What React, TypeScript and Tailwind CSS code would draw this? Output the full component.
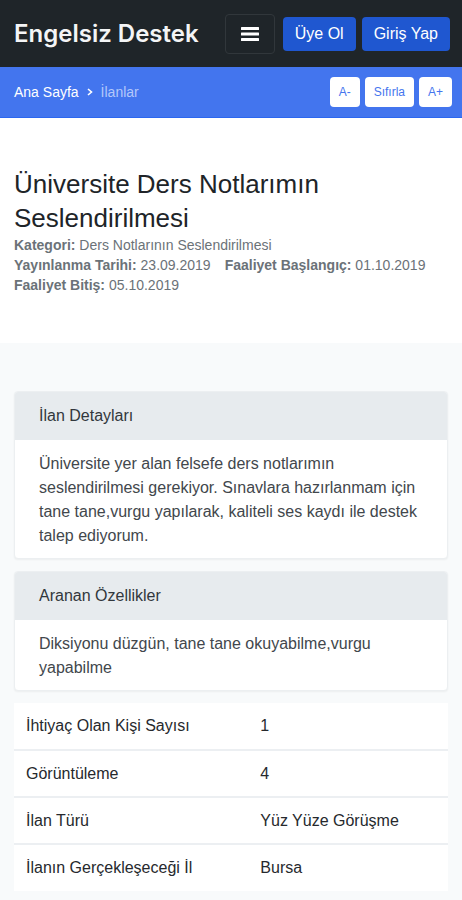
import { ReactNode } from "react";

type Row = { label: string; value: string };

const rows: Row[] = [
  { label: "İhtiyaç Olan Kişi Sayısı", value: "1" },
  { label: "Görüntüleme", value: "4" },
  { label: "İlan Türü", value: "Yüz Yüze Görüşme" },
  { label: "İlanın Gerçekleşeceği İl", value: "Bursa" },
];

function Header() {
  return (
    <header className="flex h-[67px] items-center bg-[#1f2529] pr-3 pl-3.5">
      <a href="#" className="mr-auto font-['Inter',sans-serif] text-2xl font-semibold whitespace-nowrap text-[#f4f5f6]">
        Engelsiz Destek
      </a>
      <button type="button" aria-label="Menü" className="flex h-10 w-[50px] items-center justify-center rounded-sm border border-[#31373b] text-white">
        <svg width="18" height="14" viewBox="0 0 18 14" fill="currentColor" aria-hidden="true">
          <rect y="0" width="18" height="3" rx="0.5" />
          <rect y="5.5" width="18" height="3" rx="0.5" />
          <rect y="11" width="18" height="3" rx="0.5" />
        </svg>
      </button>
      <a href="#" className="ml-2 flex h-[34px] items-center rounded-sm bg-[#1f57d0] px-3 text-base whitespace-nowrap text-white">Üye Ol</a>
      <a href="#" className="ml-1.5 flex h-[34px] items-center rounded-sm bg-[#1f57d0] px-3 text-base whitespace-nowrap text-white">Giriş Yap</a>
    </header>
  );
}

function SizeButton({ children }: { children: ReactNode }) {
  return (
    <button type="button" className="h-[30px] rounded-sm bg-white px-[9px] text-xs text-[#4575ee]">
      {children}
    </button>
  );
}

function Breadcrumb() {
  return (
    <div className="flex h-[51px] items-center border-b border-[#2b67f0] bg-[#4375ee] pr-2.5 pl-3.5">
      <nav aria-label="Konum" className="mr-auto flex items-center text-sm text-white">
        <a href="#">Ana Sayfa</a>
        <svg width="6" height="8" viewBox="0 0 6 8" className="mx-2" fill="none" stroke="currentColor" strokeWidth="1.6" aria-hidden="true">
          <path d="M1 1l3.5 3L1 7" />
        </svg>
        <a href="#" className="text-[#b4c8fa]">İlanlar</a>
      </nav>
      <div className="flex gap-[5px]">
        <SizeButton>A-</SizeButton>
        <SizeButton>Sıfırla</SizeButton>
        <SizeButton>A+</SizeButton>
      </div>
    </div>
  );
}

function Card({ title, children }: { title: string; children: ReactNode }) {
  return (
    <section className="mb-3 overflow-hidden rounded-sm border border-[#eceff1] bg-white shadow-xs">
      <h2 className="bg-[#e7ebee] px-6 py-3 text-base text-[#32373c]">{title}</h2>
      <p className="px-6 pt-3 pb-2.5 text-base text-[#42474c]">{children}</p>
    </section>
  );
}

export default function App() {
  return (
    <div className="min-h-screen bg-[#f8fafb] font-['Liberation_Sans',Arial,sans-serif]">
      <Header />
      <Breadcrumb />
      <div className="bg-white px-3.5 pt-[49px] pb-12">
        <h1 className="text-[26px] leading-[34px] text-[#202428]">Üniversite Ders Notlarımın Seslendirilmesi</h1>
        <div className="text-sm text-[#6b7278]">
          <p><b>Kategori:</b> Ders Notlarının Seslendirilmesi</p>
          <p className="flex flex-wrap gap-x-3.5">
            <span><b>Yayınlanma Tarihi:</b> 23.09.2019</span>
            <span><b>Faaliyet Başlangıç:</b> 01.10.2019</span>
            <span><b>Faaliyet Bitiş:</b> 05.10.2019</span>
          </p>
        </div>
      </div>
      <main className="px-3.5 pt-12 pb-2">
        <Card title="İlan Detayları">
          Üniversite yer alan felsefe ders notlarımın seslendirilmesi gerekiyor. Sınavlara hazırlanmam için tane tane,vurgu yapılarak, kaliteli ses kaydı ile destek talep ediyorum.
        </Card>
        <Card title="Aranan Özellikler">Diksiyonu düzgün, tane tane okuyabilme,vurgu yapabilme</Card>
        <table className="w-full bg-white text-left text-base text-[#26292d]">
          <tbody>
            {rows.map((row) => (
              <tr key={row.label} className="h-[47px] border-b-2 border-[#eceff2] last:border-b-0">
                <th scope="row" className="w-[54%] px-3 font-normal">{row.label}</th>
                <td className="px-3">{row.value}</td>
              </tr>
            ))}
          </tbody>
        </table>
      </main>
    </div>
  );
}
